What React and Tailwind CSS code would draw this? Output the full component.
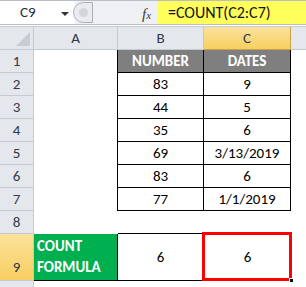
import React from 'react';

const font = { fontFamily: 'Carlito, Lato, "Liberation Sans", sans-serif' };

const rows = [
  { n: 1, b: 'NUMBER', c: 'DATES', head: true },
  { n: 2, b: '83', c: '9' },
  { n: 3, b: '44', c: '5' },
  { n: 4, b: '35', c: '6' },
  { n: 5, b: '69', c: '3/13/2019' },
  { n: 6, b: '83', c: '6' },
  { n: 7, b: '77', c: '1/1/2019' },
];

const RowHead = ({ children, active, className = '' }) => (
  <div
    className={`flex justify-center border-r border-b border-[#c5cad1] text-[15px] text-[#2f3a4a] ${
      active ? 'bg-gradient-to-b from-[#fbe29a] to-[#f7cf5f] items-end pb-0.5' : 'bg-[#e4e7eb] items-center'
    } ${className}`}
  >
    {children}
  </div>
);

const FormulaBar = () => (
  <div className="flex h-[25px] border-t border-b border-[#b9bec6] bg-[#eef0f3]">
    <div className="relative flex w-[75px] items-center bg-white">
      <span className="ml-[20px] text-[15px] text-[#1f2a3a]">C9</span>
      <span className="absolute left-[61px] top-[11px] h-0 w-0 border-l-[4px] border-r-[4px] border-t-[4px] border-l-transparent border-r-transparent border-t-[#333]" />
    </div>
    <div className="relative flex w-[83px] items-center">
      <div className="absolute left-[-2px] top-[1px] h-[21px] w-[20px] rounded-l-full border border-[#aab0b8] bg-[#e9ebee]">
        <div className="ml-[5px] mt-[5px] h-[9px] w-[9px] rounded-full bg-[#d2d6db]" />
      </div>
      <span
        className="absolute left-[67px] top-[2px] text-[15px] italic text-[#3a3a3a]"
        style={{ fontFamily: '"Liberation Serif", serif' }}
      >
        f<span className="text-[11px]">x</span>
      </span>
    </div>
    <div className="flex flex-1 items-center bg-[#ffff5c] pl-[10px] text-[16px] text-[#111]">
      =COUNT(C2:C7)
    </div>
  </div>
);

export default function App() {
  return (
    <div className="h-[287px] w-[306px] overflow-hidden bg-white" style={font}>
      <FormulaBar />
      <div className="h-[1px] bg-white" />
      <div className="h-[1px] bg-[#c7ccd2]" />
      <div className="grid grid-cols-[34px_84px_86px_87px_1fr] grid-rows-[23px_repeat(8,23px)_47px_20px]">
        {/* column headers */}
        <div className="relative border-r border-b border-[#c5cad1] bg-[#e4e7eb]">
          <div className="absolute bottom-[3px] right-[3px] h-0 w-0 border-b-[14px] border-l-[14px] border-b-[#c9cdd3] border-l-transparent" />
        </div>
        <div className="flex items-center justify-center border-r border-b border-[#c5cad1] bg-[#e4e7eb] text-[15px] text-[#2f3a4a]">A</div>
        <div className="flex items-center justify-center border-r border-b border-[#c5cad1] bg-[#e4e7eb] text-[15px] text-[#2f3a4a]">B</div>
        <div className="flex items-center justify-center border-r border-b border-[#c9a24a] bg-gradient-to-b from-[#fbe29a] to-[#f7cf5f] text-[15px] text-[#2f3a4a]">C</div>
        <div className="border-b border-[#c5cad1] bg-[#e4e7eb]" />

        {rows.map((r) => (
          <React.Fragment key={r.n}>
            <RowHead>{r.n}</RowHead>
            <div className="border-r border-black" />
            <div
              className={`flex items-center justify-center border-r border-b border-black text-[15px] ${
                r.head ? 'bg-[#7f7f7f] font-bold text-white' : 'text-black'
              }`}
            >
              {r.b}
            </div>
            <div
              className={`flex items-center justify-center border-r border-b border-black text-[15px] ${
                r.head ? 'bg-[#7f7f7f] font-bold text-white' : 'text-black'
              }`}
            >
              {r.c}
            </div>
            <div />
          </React.Fragment>
        ))}

        {/* row 8 */}
        <RowHead>8</RowHead>
        <div />
        <div className="border-b border-black" />
        <div className="border-b border-black" />
        <div />

        {/* row 9 */}
        <RowHead active>9</RowHead>
        <div className="flex flex-col justify-center border-r border-b border-black bg-[#00b050] pl-[3px] text-[15px] font-bold leading-[21px] text-white">
          <span>COUNT</span>
          <span>FORMULA</span>
        </div>
        <div className="flex items-center justify-center border-r border-b border-black text-[15px]">6</div>
        <div className="relative flex items-center justify-center border-b border-black text-[15px]">
          6
          <div className="absolute -left-[2px] -top-[2px] -right-[1px] -bottom-[1px] border-[3px] border-[#ff0000]" />
          <div className="absolute -bottom-[3px] -right-[3px] h-[5px] w-[5px] border border-white bg-black" />
        </div>
        <div />

        {/* row 10, only its top edge shows */}
        <RowHead />
        <div />
        <div />
        <div />
        <div />
      </div>
    </div>
  );
}
